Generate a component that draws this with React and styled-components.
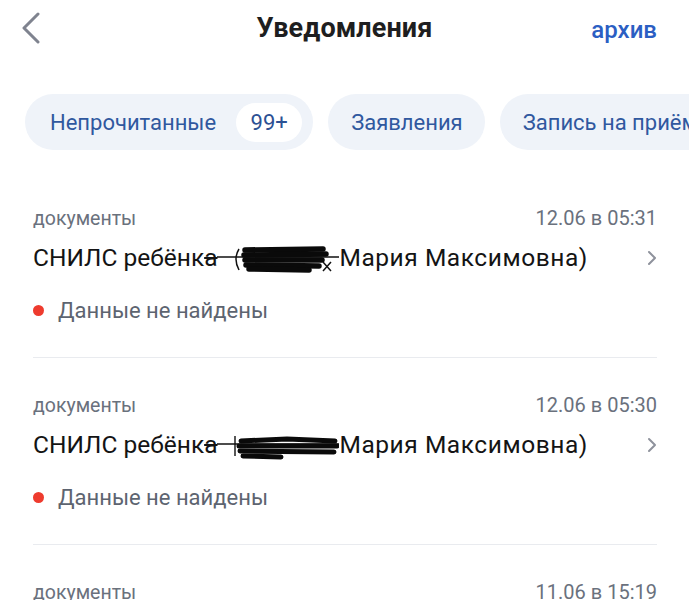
import React from "react";
import styled, { createGlobalStyle } from "styled-components";

const Global = createGlobalStyle`
  html, body { margin: 0; padding: 0; background: #ffffff; }
  body { font-family: Roboto, "Liberation Sans", Arial, sans-serif; -webkit-font-smoothing: antialiased; }
  #root { width: 689px; overflow: hidden; }
`;

const Page = styled.div`
  width: 689px;
  height: 600px;
  overflow: hidden;
  background: #fff;
`;

const Header = styled.header`
  height: 56px;
  display: grid;
  grid-template-columns: 1fr auto 1fr;
  align-items: center;
  padding: 0 32px;
`;

const BackButton = styled.button`
  justify-self: start;
  margin-left: -11px;
  border: 0;
  background: none;
  padding: 0;
  width: 24px;
  height: 32px;
  display: flex;
  align-items: center;
  color: #7f838f;
`;

const Title = styled.h1`
  margin: 0;
  font-size: 27px;
  font-weight: 700;
  color: #1e1e20;
  letter-spacing: 0.1px;
`;

const Archive = styled.a`
  justify-self: end;
  font-size: 24px;
  font-weight: 500;
  color: #2b5ec3;
  text-decoration: none;
  margin-top: 3px;
`;

const Chips = styled.nav`
  margin-top: 38px;
  display: flex;
  gap: 15px;
  padding-left: 25px;
  white-space: nowrap;
  overflow: hidden;
`;

const Chip = styled.div`
  flex: none;
  height: 56px;
  border-radius: 28px;
  background: #eff3f9;
  display: flex;
  align-items: center;
  padding: 0 ${(p) => (p.$badge ? "11px" : "22px")} 0 ${(p) => (p.$first ? "25px" : "23px")};
  font-size: 22px;
  color: #30589f;
`;

const Badge = styled.span`
  margin-left: 20px;
  height: 39px;
  min-width: 66px;
  box-sizing: border-box;
  padding: 0 13px;
  border-radius: 20px;
  background: #ffffff;
  display: flex;
  align-items: center;
  justify-content: center;
  font-size: 22px;
  color: #2c5194;
`;

const List = styled.div`
  margin-top: 21px;
  padding: 0 32px 0 33px;
`;

const Item = styled.article`
  padding: 35px 0 32px;
  border-bottom: 1px solid #e9ebef;
`;

const Meta = styled.div`
  display: flex;
  justify-content: space-between;
  align-items: center;
  height: 24px;
  font-size: 19.5px;
  color: #6a717d;
`;

const Date = styled.span`
  font-size: 20px;
`;

const Row = styled.div`
  margin-top: 12px;
  height: 32px;
  display: flex;
  align-items: center;
  justify-content: space-between;
`;

const ItemTitle = styled.div`
  font-size: 24.5px;
  color: #141414;
  white-space: nowrap;
`;

const Tail = styled.span`
  letter-spacing: 0.55px;
`;

const Struck = styled.span`
  text-decoration: line-through;
  text-decoration-thickness: 1.5px;
`;

const Scribble = styled.svg`
  display: inline-block;
  vertical-align: -7px;
  width: 122px;
  height: 28px;
`;

const Status = styled.div`
  margin-top: 21px;
  height: 30px;
  display: flex;
  align-items: center;
  gap: 14px;
  font-size: 22px;
  color: #5d6470;
`;

const Dot = styled.span`
  width: 11px;
  height: 11px;
  border-radius: 50%;
  background: #ee3b2e;
  flex: none;
`;

function Redaction({ variant }) {
  if (variant === 2) {
    return (
      <Scribble viewBox="0 0 122 28">
        <path d="M0 12 L122 12" stroke="#111" strokeWidth="1.6" />
        <path d="M18 4 L18 24" stroke="#111" strokeWidth="1.4" />
        <g stroke="#0a0a0a" strokeWidth="5" strokeLinecap="round" fill="none">
          <path d="M24 9 L70 7 L118 9" />
          <path d="M22 14 L120 14" />
          <path d="M23 19 L117 20" />
          <path d="M26 24 L64 25" />
        </g>
      </Scribble>
    );
  }
  return (
    <Scribble viewBox="0 0 122 28">
      <path d="M0 12 L122 12" stroke="#111" strokeWidth="1.6" />
      <path d="M22 4 Q16 14 22 25" stroke="#111" strokeWidth="1.5" fill="none" />
      <g stroke="#0a0a0a" strokeWidth="5.5" strokeLinecap="round" fill="none">
        <path d="M28 5 L106 4" />
        <path d="M27 10 L109 9" />
        <path d="M28 15 L105 15" />
        <path d="M29 20 L102 21" />
        <path d="M32 24 L92 25" />
      </g>
      <path d="M106 17 L114 26 M114 17 L106 26" stroke="#111" strokeWidth="1.5" />
    </Scribble>
  );
}

function Chevron() {
  return (
    <svg width="10" height="16" viewBox="0 0 10 16">
      <path d="M2 2 L8 8 L2 14" stroke="#8e929c" strokeWidth="2" fill="none" strokeLinecap="round" strokeLinejoin="round" />
    </svg>
  );
}

const items = [
  { date: "12.06 в 05:31", variant: 1 },
  { date: "12.06 в 05:30", variant: 2 },
  { date: "11.06 в 15:19", variant: 1 },
];

export default function App() {
  return (
    <Page>
      <Global />
      <Header>
        <BackButton aria-label="Назад">
          <svg width="20" height="32" viewBox="0 0 20 32">
            <path d="M17 2 L3 16 L17 30" stroke="#7f838f" strokeWidth="3" fill="none" strokeLinecap="round" strokeLinejoin="round" />
          </svg>
        </BackButton>
        <Title>Уведомления</Title>
        <Archive>архив</Archive>
      </Header>
      <Chips>
        <Chip $first $badge>
          Непрочитанные<Badge>99+</Badge>
        </Chip>
        <Chip>Заявления</Chip>
        <Chip>Запись на приём</Chip>
      </Chips>
      <List>
        {items.map((it, i) => (
          <Item key={i}>
            <Meta>
              <span>документы</span>
              <Date>{it.date}</Date>
            </Meta>
            <Row>
              <ItemTitle>
                СНИЛС ребёнк<Struck>а</Struck>
                <Redaction variant={it.variant} />
                <Tail>Мария Максимовна)</Tail>
              </ItemTitle>
              <Chevron />
            </Row>
            <Status>
              <Dot />
              Данные не найдены
            </Status>
          </Item>
        ))}
      </List>
    </Page>
  );
}
